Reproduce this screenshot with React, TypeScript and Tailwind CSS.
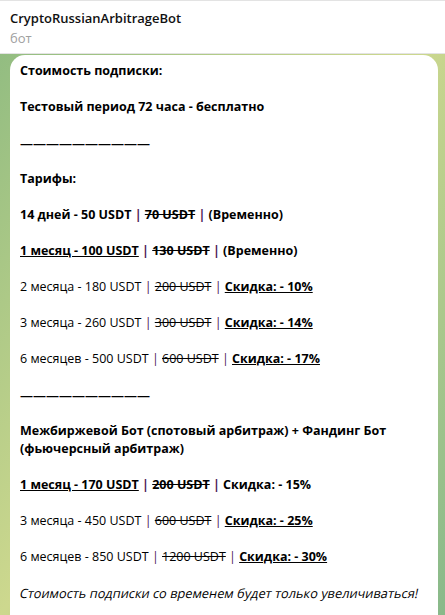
import React from "react";

const P = () => <span className="text-[#4a1656]"> | </span>;

export default function App() {
  return (
    <div
      className="w-[445px] h-[615px] overflow-hidden flex flex-col bg-[linear-gradient(to_bottom_right,#8dba80,#cdd88e_50%,#88b98a)] text-black"
      style={{ fontFamily: '"Open Sans", "Noto Sans", sans-serif' }}
    >
      <div className="h-[54px] shrink-0 bg-white border-t border-b border-[#e3e3e3] pl-[10px] pt-[8px]">
        <div className="text-[13px] font-semibold leading-[18px] text-[#111]">CryptoRussianArbitrageBot</div>
        <div className="text-[13px] leading-[18px] mt-[2px] text-[#a0a0a0]">бот</div>
      </div>
      <div className="flex-1 pl-[10px] pr-[7px] pt-[1px]">
        <div className="h-full bg-white rounded-t-[15px] pl-[10px] pr-[8px] pt-[7px] text-[12.5px] leading-[18px]">
          <div className="font-bold">Стоимость подписки:</div>
          <div className="h-[18px]" />
          <div className="font-bold">Тестовый период 72 часа - бесплатно</div>
          <div className="h-[18px]" />
          <div className="font-bold text-[13px]">——————————</div>
          <div className="h-[18px]" />
          <div className="font-bold">Тарифы:</div>
          <div className="h-[18px]" />
          <div className="font-bold">
            14 дней - 50 USDT<P /><s>70 USDT</s><P />(Временно)
          </div>
          <div className="h-[18px]" />
          <div className="font-bold">
            <span className="underline">1 месяц - 100 </span><span className="underline">USDT</span><P /><s>130 USDT</s><P />(Временно)
          </div>
          <div className="h-[18px]" />
          <div>
            2 месяца - 180 USDT<P /><s>200 USDT</s><P /><span className="font-bold underline">Скидка: - 10%</span>
          </div>
          <div className="h-[18px]" />
          <div>
            3 месяца - 260 USDT<P /><s>300 USDT</s><P /><span className="font-bold underline">Скидка: - 14%</span>
          </div>
          <div className="h-[18px]" />
          <div>
            6 месяцев - 500 USDT<P /><s>600 USDT</s><P /><span className="font-bold underline">Скидка: - 17%</span>
          </div>
          <div className="h-[18px]" />
          <div className="font-bold text-[13px]">——————————</div>
          <div className="h-[18px]" />
          <div className="font-bold">
            Межбиржевой Бот (спотовый арбитраж) + Фандинг Бот (фьючерсный арбитраж)
          </div>
          <div className="h-[18px]" />
          <div className="font-bold">
            <span className="underline">1 месяц - 170 </span><span className="underline">USDT</span><P /><s>200 USDT</s><P />Скидка: - 15%
          </div>
          <div className="h-[18px]" />
          <div>
            3 месяца - 450 USDT<P /><s>600 USDT</s><P /><span className="font-bold underline">Скидка: - 25%</span>
          </div>
          <div className="h-[18px]" />
          <div>
            6 месяцев - 850 USDT<P /><s>1200 USDT</s><P /><span className="font-bold underline">Скидка: - 30%</span>
          </div>
          <div className="h-[18px]" />
          <div className="text-[12.8px]">
            <span className="inline-block -skew-x-12 origin-left">Стоимость подписки со временем будет только увеличиваться!</span>
          </div>
        </div>
      </div>
    </div>
  );
}
